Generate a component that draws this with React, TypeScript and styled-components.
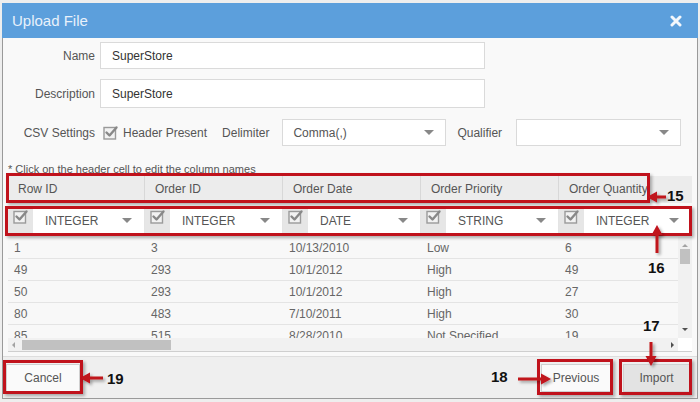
import React from "react";
import styled, { createGlobalStyle } from "styled-components";

const Global = createGlobalStyle`
  html, body { margin: 0; padding: 0; }
  body { font-family: "Liberation Sans", Arial, sans-serif; background: #eeeeee; }
  * { box-sizing: border-box; }
`;

const RED = "#c0121c";

const Page = styled.div`
  position: relative;
  width: 700px;
  height: 402px;
  overflow: hidden;
  background: #eeeeee;
  padding: 3px 0 0 2px;
`;

const Dialog = styled.div`
  width: 696px;
  height: 396px;
  border: 1px solid #9a9a9a;
  border-top: none;
  background: #f9f9f9;
  display: flex;
  flex-direction: column;
`;

const TitleBar = styled.div`
  height: 35px;
  flex: none;
  background: #5c9fdc;
  display: flex;
  align-items: center;
  justify-content: space-between;
  padding: 0 16px 0 10px;
  margin: 0 -1px;
`;

const Title = styled.div`
  color: #e8f1fb;
  font-size: 15px;
`;

const Body = styled.div`
  flex: 1;
  display: flex;
  flex-direction: column;
  padding-top: 4px;
`;

const FormRow = styled.div<{ $h: number; $mt?: number }>`
  display: flex;
  align-items: center;
  height: ${(p) => p.$h}px;
  margin-top: ${(p) => p.$mt ?? 0}px;
`;

const Label = styled.div`
  width: 92px;
  text-align: right;
  font-size: 12px;
  color: #555;
  margin-right: 5px;
`;

const TextInput = styled.input`
  width: 385px;
  height: 100%;
  border: 1px solid #dadada;
  background: #fff;
  padding: 0 0 0 11px;
  font: 12px "Liberation Sans", Arial, sans-serif;
  color: #333;
  outline: none;
`;

const InlineText = styled.div<{ $ml: number }>`
  margin-left: ${(p) => p.$ml}px;
  font-size: 12px;
  color: #555;
`;

const CheckWrap = styled.div<{ $ml?: number }>`
  margin-left: ${(p) => p.$ml ?? 0}px;
  display: flex;
`;

const Select = styled.div<{ $ml: number; $w: number }>`
  margin-left: ${(p) => p.$ml}px;
  width: ${(p) => p.$w}px;
  height: 100%;
  background: #fff;
  border: 1px solid #dadada;
  display: flex;
  align-items: center;
  justify-content: space-between;
  padding: 0 11px 0 10px;
  font-size: 12px;
  color: #555;
`;

const Caret = styled.span`
  width: 0;
  height: 0;
  border-left: 5px solid transparent;
  border-right: 5px solid transparent;
  border-top: 5px solid #888;
`;

const Note = styled.div`
  margin: 18px 0 0 5px;
  font-size: 11px;
  color: #555;
  line-height: 11px;
`;

const Table = styled.div`
  margin: 0 0 0 5px;
  width: 684px;
  display: flex;
  flex-direction: column;
`;

const HeaderRow = styled.div`
  margin-top: 1px;
  height: 27px;
  background: #ececec;
  display: flex;
  overflow: hidden;
`;

const HeaderCell = styled.div<{ $w: number }>`
  flex: none;
  width: ${(p) => p.$w}px;
  border-right: 1px solid #d8d8d8;
  padding-left: 10px;
  line-height: 27px;
  font-size: 12px;
  color: #555;
  white-space: nowrap;
`;

const TypeRow = styled.div`
  margin-top: 4px;
  height: 27px;
  display: flex;
  overflow: hidden;
`;

const TypeCell = styled.div<{ $w: number }>`
  flex: none;
  width: ${(p) => p.$w}px;
  display: flex;
  border-right: 1px solid #e4e4e4;
`;

const CheckCell = styled.div`
  width: 25px;
  background: #e6e6e6;
  display: flex;
  justify-content: center;
  padding-top: 2px;
`;

const TypeSelect = styled.div`
  flex: 1;
  background: #fff;
  display: flex;
  align-items: center;
  justify-content: space-between;
  padding: 0 12px 0 12px;
  font-size: 12px;
  color: #555;
`;

const DataArea = styled.div`
  margin-top: 3px;
  height: 115px;
  display: grid;
  grid-template-columns: 1fr 14px;
  grid-template-rows: 1fr 13px;
  border-bottom: 1px solid #cfcfcf;
`;

const Rows = styled.div`
  overflow: hidden;
  background: #f8f8f8;
`;

const DataRow = styled.div`
  height: 22px;
  display: flex;
  border-bottom: 1px solid #e4e4e4;
`;

const DataCell = styled.div<{ $w: number }>`
  flex: none;
  width: ${(p) => p.$w}px;
  padding-left: 6px;
  line-height: 22px;
  font-size: 12px;
  color: #666;
  white-space: nowrap;
`;

const VScroll = styled.div`
  background: #f1f1f1;
  display: flex;
  flex-direction: column;
  align-items: center;
  justify-content: space-between;
  padding: 7px 0 7px;
`;

const VThumb = styled.div`
  width: 10px;
  height: 15px;
  background: #c1c1c1;
  margin-top: 2px;
  margin-bottom: auto;
`;

const HScroll = styled.div`
  background: #f1f1f1;
  display: flex;
  align-items: center;
  padding: 0 4px 0 4px;
`;

const HThumb = styled.div`
  width: 149px;
  height: 10px;
  background: #c1c1c1;
  margin-left: 7px;
  margin-right: auto;
`;

const Corner = styled.div`
  background: #fff;
`;

const Tri = styled.span<{ $dir: "up" | "down" | "left" | "right" }>`
  width: 0;
  height: 0;
  ${(p) =>
    p.$dir === "up"
      ? `border-left:3px solid transparent;border-right:3px solid transparent;border-bottom:3px solid #a3a3a3;`
      : p.$dir === "down"
      ? `border-left:3px solid transparent;border-right:3px solid transparent;border-top:3px solid #505050;`
      : p.$dir === "left"
      ? `border-top:3px solid transparent;border-bottom:3px solid transparent;border-right:3px solid #a3a3a3;`
      : `border-top:3px solid transparent;border-bottom:3px solid transparent;border-left:3px solid #505050;`}
`;

const Footer = styled.div`
  margin-top: 4px;
  flex: 1;
  background: #efefef;
  border-top: 1px solid #dedede;
  display: flex;
  align-items: center;
  padding: 0 7px 0 3px;
`;

const Button = styled.div<{ $w: number; $gray?: boolean; $ml?: string }>`
  width: ${(p) => p.$w}px;
  height: 28px;
  margin-left: ${(p) => p.$ml ?? "0"};
  background: ${(p) => (p.$gray ? "#e3e3e3" : "#fafafa")};
  border: 1px solid #d0d0d0;
  display: flex;
  align-items: center;
  justify-content: center;
  font-size: 12px;
  color: #555;
`;

const AnnotBox = styled.div<{ $x: number; $y: number; $w: number; $h: number }>`
  position: absolute;
  left: ${(p) => p.$x}px;
  top: ${(p) => p.$y}px;
  width: ${(p) => p.$w}px;
  height: ${(p) => p.$h}px;
  border: 3px solid ${RED};
  box-shadow: 2px 2px 3px rgba(0, 0, 0, 0.3);
  pointer-events: none;
`;

const Callout = styled.div<{ $x: number; $y: number }>`
  position: absolute;
  left: ${(p) => p.$x}px;
  top: ${(p) => p.$y}px;
  font-size: 15px;
  line-height: 15px;
  font-weight: bold;
  color: #111;
`;

const Overlay = styled.svg`
  position: absolute;
  left: 0;
  top: 0;
  pointer-events: none;
`;

const CheckIcon = () => (
  <svg width="16" height="15" viewBox="0 0 16 15">
    <rect x="1" y="2.5" width="11.5" height="11.5" fill="#f2f2f2" stroke="#9a9a9a" strokeWidth="1.4" />
    <path d="M3.5 7.5 L6.5 10.5 L13.5 2.5" fill="none" stroke="#888" strokeWidth="2.4" strokeLinecap="round" strokeLinejoin="round" />
  </svg>
);

const CloseIcon = () => (
  <svg width="12" height="12" viewBox="0 0 12 12">
    <path d="M2 2 L10 10 M10 2 L2 10" stroke="#f3f7fc" strokeWidth="3" strokeLinecap="round" />
  </svg>
);

type Pt = [number, number];
function arrowPath(tail: Pt, tip: Pt) {
  const [x1, y1] = tail;
  const [x2, y2] = tip;
  const dx = x2 - x1, dy = y2 - y1;
  const len = Math.hypot(dx, dy);
  const ux = dx / len, uy = dy / len;
  const hl = 10, hw = 5.5;
  const bx = x2 - ux * hl, by = y2 - uy * hl;
  const px = -uy, py = ux;
  return {
    line: `M${x1} ${y1} L${bx} ${by}`,
    head: `M${x2} ${y2} L${bx + px * hw} ${by + py * hw} L${bx - px * hw} ${by - py * hw} Z`,
  };
}

const arrows: [Pt, Pt][] = [
  [[666, 197], [647, 197]],
  [[657, 253], [657, 225]],
  [[651, 342], [651, 366]],
  [[518, 379], [551, 379]],
  [[103, 378], [80, 378]],
];

const W = [137, 138, 138, 138, 138];
const headers = ["Row ID", "Order ID", "Order Date", "Order Priority", "Order Quantity"];
const types = ["INTEGER", "INTEGER", "DATE", "STRING", "INTEGER"];
const data = [
  ["1", "3", "10/13/2010", "Low", "6"],
  ["49", "293", "10/1/2012", "High", "49"],
  ["50", "293", "10/1/2012", "High", "27"],
  ["80", "483", "7/10/2011", "High", "30"],
  ["85", "515", "8/28/2010", "Not Specified", "19"],
];

export default function App() {
  return (
    <>
      <Global />
      <Page>
        <Dialog>
          <TitleBar>
            <Title>Upload File</Title>
            <CloseIcon />
          </TitleBar>
          <Body>
            <FormRow $h={27}>
              <Label>Name</Label>
              <TextInput readOnly value="SuperStore" />
            </FormRow>
            <FormRow $h={29} $mt={10}>
              <Label>Description</Label>
              <TextInput readOnly value="SuperStore" />
            </FormRow>
            <FormRow $h={27} $mt={11}>
              <Label>CSV Settings</Label>
              <CheckWrap $ml={3}>
                <CheckIcon />
              </CheckWrap>
              <InlineText $ml={4}>Header Present</InlineText>
              <InlineText $ml={15}>Delimiter</InlineText>
              <Select $ml={13} $w={164}>
                <span>Comma(,)</span>
                <Caret />
              </Select>
              <InlineText $ml={11}>Qualifier</InlineText>
              <Select $ml={14} $w={165}>
                <span />
                <Caret />
              </Select>
            </FormRow>
            <Note>* Click on the header cell to edit the column names</Note>
            <Table>
              <HeaderRow>
                {headers.map((h, i) => (
                  <HeaderCell key={h} $w={W[i]}>{h}</HeaderCell>
                ))}
              </HeaderRow>
              <TypeRow>
                {types.map((t, i) => (
                  <TypeCell key={i} $w={i === 4 ? 133 : W[i]}>
                    <CheckCell>
                      <CheckIcon />
                    </CheckCell>
                    <TypeSelect>
                      <span>{t}</span>
                      <Caret />
                    </TypeSelect>
                  </TypeCell>
                ))}
              </TypeRow>
              <DataArea>
                <Rows>
                  {data.map((r, ri) => (
                    <DataRow key={ri}>
                      {r.map((c, ci) => (
                        <DataCell key={ci} $w={W[ci]}>{c}</DataCell>
                      ))}
                    </DataRow>
                  ))}
                </Rows>
                <VScroll>
                  <Tri $dir="up" />
                  <VThumb />
                  <Tri $dir="down" />
                </VScroll>
                <HScroll>
                  <Tri $dir="left" />
                  <HThumb />
                  <Tri $dir="right" />
                </HScroll>
                <Corner />
              </DataArea>
            </Table>
            <Footer>
              <Button $w={74}>Cancel</Button>
              <Button $w={70} $ml="auto">Previous</Button>
              <Button $w={67} $ml="12px" $gray>Import</Button>
            </Footer>
          </Body>
        </Dialog>

        <AnnotBox $x={6} $y={173} $w={644} $h={30} />
        <AnnotBox $x={5} $y={206} $w={687} $h={30} />
        <AnnotBox $x={3} $y={360} $w={80} $h={34} />
        <AnnotBox $x={537} $y={359} $w={76} $h={36} />
        <AnnotBox $x={619} $y={359} $w={73} $h={36} />

        <Overlay width="700" height="402" viewBox="0 0 700 402">
          <defs>
            <filter id="sh" x="-50%" y="-50%" width="200%" height="200%">
              <feDropShadow dx="2" dy="2" stdDeviation="1.5" floodColor="#000" floodOpacity="0.35" />
            </filter>
          </defs>
          {arrows.map(([t, h], i) => {
            const a = arrowPath(t, h);
            return (
              <g key={i} filter="url(#sh)">
                <path d={a.line} stroke={RED} strokeWidth="3" fill="none" />
                <path d={a.head} fill={RED} />
              </g>
            );
          })}
        </Overlay>

        <Callout $x={667} $y={188}>15</Callout>
        <Callout $x={648} $y={260}>16</Callout>
        <Callout $x={643} $y={318}>17</Callout>
        <Callout $x={491} $y={369}>18</Callout>
        <Callout $x={107} $y={371}>19</Callout>
      </Page>
    </>
  );
}
